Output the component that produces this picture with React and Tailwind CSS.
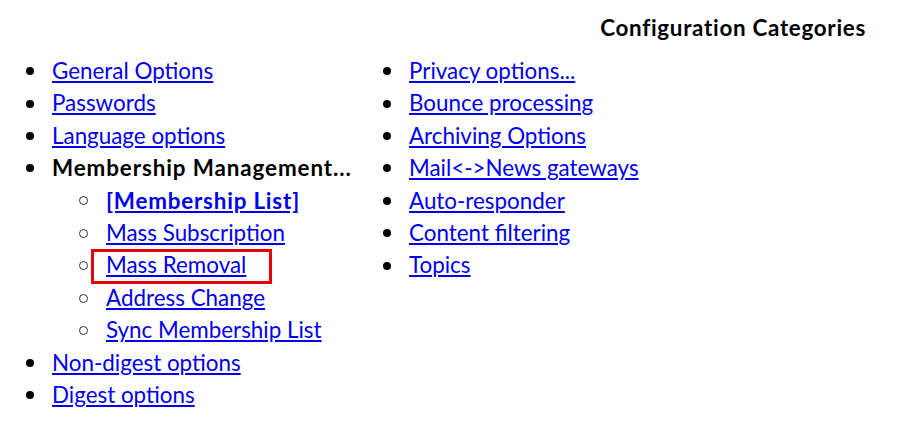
const left = [
  { label: 'General Options' },
  { label: 'Passwords' },
  { label: 'Language options' },
  {
    label: 'Membership Management...',
    current: true,
    children: [
      { label: '[Membership List]', bold: true },
      { label: 'Mass Subscription' },
      { label: 'Mass Removal', marked: true },
      { label: 'Address Change' },
      { label: 'Sync Membership List' },
    ],
  },
  { label: 'Non-digest options' },
  { label: 'Digest options' },
];

const right = [
  'Privacy options...',
  'Bounce processing',
  'Archiving Options',
  'Mail<->News gateways',
  'Auto-responder',
  'Content filtering',
  'Topics',
];

function Disc() {
  return <span className="mr-[18px] h-[8px] w-[8px] shrink-0 rounded-full bg-black" />;
}

function Circle() {
  return (
    <span className="mr-[18px] h-[9px] w-[9px] shrink-0 rounded-full border-[1.5px] border-[#333]" />
  );
}

function Item({ children, bullet }) {
  return (
    <li className="flex items-center">
      {bullet}
      {children}
    </li>
  );
}

function NavLink({ children, bold }) {
  return (
    <a
      href="#"
      className={bold ? 'font-bold tracking-[0.8px] text-[#0000ee] underline' : 'text-[#0000ee] underline'}
    >
      {children}
    </a>
  );
}

export default function App() {
  return (
    <div
      className="h-[443px] w-[900px] bg-white text-black"
      style={{ fontFamily: 'Lato, "Noto Sans", sans-serif' }}
    >
      <div className="flex justify-end pr-[34px] pt-[13px]">
        <h2 className="text-[22.4px] font-bold leading-[30px] tracking-[0.7px]">
          Configuration Categories
        </h2>
      </div>
      <div className="flex pl-[26px] pt-[12px] text-[22.4px] leading-[32.4px]">
        <ul className="w-[357px]">
          {left.map((item) => (
            <li key={item.label}>
              <div className="flex items-center">
                <Disc />
                {item.current ? (
                  <span className="font-bold tracking-[0.9px]">{item.label}</span>
                ) : (
                  <NavLink>{item.label}</NavLink>
                )}
              </div>
              {item.children && (
                <ul className="pl-[53px]">
                  {item.children.map((c) => (
                    <Item key={c.label} bullet={<Circle />}>
                      <span className="relative">
                        <NavLink bold={c.bold}>{c.label}</NavLink>
                        {c.marked && (
                          <span className="pointer-events-none absolute bottom-[-2px] left-[-15px] right-[-26px] top-[0px] border-[3px] border-[#e8000b]" />
                        )}
                      </span>
                    </Item>
                  ))}
                </ul>
              )}
            </li>
          ))}
        </ul>
        <ul>
          {right.map((label) => (
            <Item key={label} bullet={<Disc />}>
              <NavLink>{label}</NavLink>
            </Item>
          ))}
        </ul>
      </div>
    </div>
  );
}
